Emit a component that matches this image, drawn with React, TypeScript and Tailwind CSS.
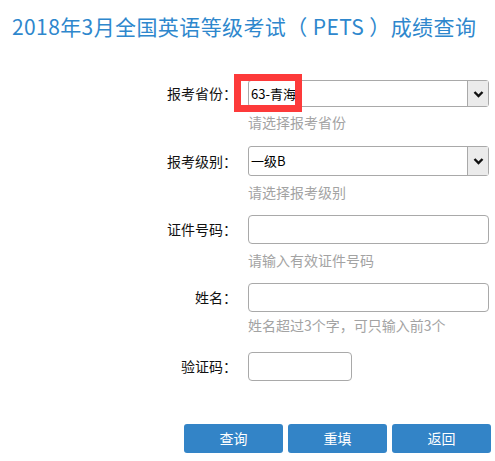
import React from 'react'

const font = { fontFamily: '"Noto Sans CJK SC", "Noto Sans", sans-serif' }

function Chevron() {
  return (
    <svg width="11" height="8" viewBox="0 0 11 8">
      <path d="M1.5 2 L5.5 6 L9.5 2" fill="none" stroke="#111" strokeWidth="2.4" />
    </svg>
  )
}

function FakeSelect({ value, height }: { value: string; height: string }) {
  return (
    <div className={`flex w-[241px] ${height} rounded-[3px] border border-[#a9a9a9] bg-white`}>
      <div className="flex flex-1 items-center pl-[2px] text-[13px] text-black">{value}</div>
      <div className="flex w-[21px] items-center justify-center border-l border-[#a9a9a9] bg-[#ebebeb]">
        <Chevron />
      </div>
    </div>
  )
}

function Label({ text }: { text: string }) {
  return <div className="w-[237px] shrink-0 text-right text-[14px] text-[#111]">{text}</div>
}

function Hint({ text, mt }: { text: string; mt: string }) {
  return <div className={`${mt} pl-[248px] text-[14px] leading-[20px] text-[#a3a3a3]`}>{text}</div>
}

export default function App() {
  return (
    <div className="h-[461px] w-[495px] overflow-hidden bg-white" style={font}>
      <div className="pl-[12px] pt-[11px] text-[21px] leading-[30px] tracking-[0.4px] whitespace-pre text-[#2e87cd]">
        2018年3月全国英语等级考试（ PETS ）成绩查询
      </div>

      <div className="mt-[39px] flex items-center">
        <Label text="报考省份：" />
        <div className="relative ml-[11px]">
          <FakeSelect value="63-青海" height="h-[27px]" />
          <div className="absolute left-[-14px] top-[-6px] h-[38px] w-[68px] border-[7px] border-[#fd3a3a]" />
        </div>
      </div>
      <Hint text="请选择报考省份" mt="mt-[5px]" />

      <div className="mt-[14px] flex items-center">
        <Label text="报考级别：" />
        <div className="ml-[11px]">
          <FakeSelect value="一级B" height="h-[30px]" />
        </div>
      </div>
      <Hint text="请选择报考级别" mt="mt-[6px]" />

      <div className="mt-[13px] flex items-center">
        <Label text="证件号码：" />
        <div className="ml-[11px] h-[29px] w-[241px] rounded-[4px] border border-[#a9a9a9]" />
      </div>
      <Hint text="请输入有效证件号码" mt="mt-[6px]" />

      <div className="mt-[13px] flex items-center">
        <Label text="姓名：" />
        <div className="ml-[11px] h-[29px] w-[241px] rounded-[4px] border border-[#a9a9a9]" />
      </div>
      <Hint text="姓名超过3个字，可只输入前3个" mt="mt-[3px]" />

      <div className="mt-[17px] flex items-center">
        <Label text="验证码：" />
        <div className="ml-[11px] h-[29px] w-[104px] rounded-[4px] border border-[#a9a9a9]" />
      </div>

      <div className="mt-[43px] flex gap-[5px] pl-[184px]">
        {['查询', '重填', '返回'].map((t) => (
          <button
            key={t}
            className="flex h-[29px] w-[99px] items-center justify-center rounded-[3px] bg-[#3384c7] text-[14px] text-white"
          >
            {t}
          </button>
        ))}
      </div>
    </div>
  )
}
